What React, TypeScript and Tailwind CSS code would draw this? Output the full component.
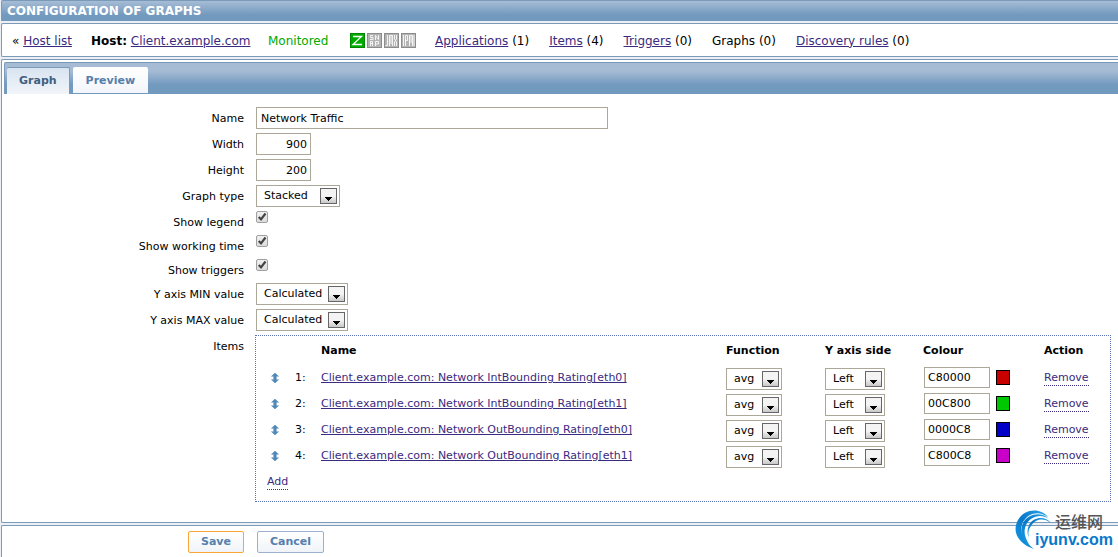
import { useState } from "react";
import type { ReactNode } from "react";

interface GraphItem {
  id: number;
  name: string;
  colour: string;
}

const initialItems: GraphItem[] = [
  { id: 1, name: "Client.example.com: Network IntBounding Rating[eth0]", colour: "C80000" },
  { id: 2, name: "Client.example.com: Network IntBounding Rating[eth1]", colour: "00C800" },
  { id: 3, name: "Client.example.com: Network OutBounding Rating[eth0]", colour: "0000C8" },
  { id: 4, name: "Client.example.com: Network OutBounding Rating[eth1]", colour: "C800C8" },
];

const hostLinks = [
  { label: "Applications", count: 1, link: true },
  { label: "Items", count: 4, link: true },
  { label: "Triggers", count: 0, link: true },
  { label: "Graphs", count: 0, link: false },
  { label: "Discovery rules", count: 0, link: true },
];

const linkClass = "text-[#3a2a80] underline";
const dottedClass = "inline-block cursor-pointer border-b border-dotted border-[#3a2a80] leading-[14px] text-[#3a2a80]";

const Select = ({ id, label, options, className }: { id: string; label?: string; options: string[]; className: string }) => (
  <div className={`relative ${className}`}>
    <select
      id={id}
      aria-label={label}
      className="block h-[22px] w-full appearance-none border border-[#aca899] bg-white pl-[7px] text-[11px] leading-5 outline-none"
    >
      {options.map((o) => (
        <option key={o}>{o}</option>
      ))}
    </select>
    <span className="pointer-events-none absolute top-[3px] right-[3px] flex h-4 w-[17px] items-end justify-center border border-[#666] bg-linear-to-b from-[#f4f4f4] from-50% to-[#c8c8c8] pb-[2px]">
      <svg width="7" height="4" viewBox="0 0 7 4" shapeRendering="crispEdges">
        <path d="M0 0h7v1h-1v1h-1v1h-1v1h-1v-1h-1v-1h-1v-1h-1z" fill="#000" />
      </svg>
    </span>
  </div>
);

const Row = ({ label, htmlFor, short, children }: { label: string; htmlFor?: string; short?: boolean; children: ReactNode }) => (
  <div className={`flex items-start gap-3 ${short ? "min-h-6" : "min-h-[26px]"}`}>
    <label htmlFor={htmlFor} className="w-[240px] shrink-0 text-right leading-6">
      {label}
    </label>
    {children}
  </div>
);

const Checkbox = ({ id }: { id: string }) => (
  <span className="relative block h-[13px] w-3">
    <input
      id={id}
      type="checkbox"
      defaultChecked
      className="peer block h-3 w-3 appearance-none rounded-xs border border-[#a0a0a0] bg-linear-to-b from-[#f0f0f0] to-[#dcdcdc]"
    />
    <svg viewBox="0 0 12 12" className="pointer-events-none absolute inset-0 hidden h-3 w-3 peer-checked:block">
      <path d="M2.8 6 5 8.400 9.500 2.500" fill="none" stroke="#444" strokeWidth="2.200" />
    </svg>
  </span>
);

const Badge = ({ title, active, children }: { title: string; active?: boolean; children: ReactNode }) => (
  <svg width="15" height="15" viewBox="0 0 15 15" role="img" aria-label={title}>
    <rect x="0.5" y="0.5" width="14" height="14" fill={active ? "#0a0" : "#b4b4b4"} stroke={active ? "#080" : "#8c8c8c"} />
    <g fill="none" stroke={active ? "#fff" : "#f4f4f4"} strokeWidth={active ? "1.300" : "1"}>
      {children}
    </g>
  </svg>
);

const SortHandle = () => (
  <svg width="8" height="10" viewBox="0 0 8 10" className="inline-block align-middle">
    <path d="M4 0 7.500 3.300H5.300v3.400H7.500L4 10 .5 6.700h2.200V3.300H.5z" fill="#5088b8" stroke="#5088b8" strokeWidth="0.500" />
  </svg>
);

const Watermark = () => (
  <svg
    width="100"
    height="42"
    viewBox="0 0 100 42"
    className="pointer-events-none absolute right-[4px] bottom-[6px]"
    role="img"
    aria-label="iyunv.com"
  >
    <defs>
      <linearGradient id="swirl" x1="0" y1="1" x2="1" y2="0">
        <stop offset="0" stopColor="#18a0e8" />
        <stop offset="0.5" stopColor="#0878c8" />
        <stop offset="1" stopColor="#2aa8e8" />
      </linearGradient>
    </defs>
    <g fill="url(#swirl)">
      <path d="M34 8C27-1 11-1 4 11C-2 22 3 34 20 40C10 32 4 23 9 13C14 4 25 1 34 8z" />
      <path d="M35 10C27 2 14 5 9 14C5 23 8 31 16 37C11 29 9 23 12 16C16 8 26 4 35 10z" />
      <path d="M37 14C31 6 19 8 15 16C13 21 13 25 15 29C14 24 14 21 17 17C21 10 29 8 37 14z" />
    </g>
    <text x="41" y="19" fontSize="16" fontWeight="500" fill="#555" fontFamily="'Liberation Sans', 'Noto Sans CJK SC', sans-serif">
      运维网
    </text>
    <text x="21" y="36" fontSize="16" fontWeight="700" fill="#0878cc" fontFamily="'Liberation Sans', sans-serif">
      iyunv.com
    </text>
  </svg>
);

const App = () => {
  const [items, setItems] = useState<GraphItem[]>(initialItems);
  const [name, setName] = useState("Network Traffic");

  const setColour = (id: number, colour: string) => {
    setItems((prev) => prev.map((i) => (i.id === id ? { ...i, colour } : i)));
  };

  const removeItem = (id: number) => {
    setItems((prev) => prev.filter((i) => i.id !== id));
  };

  return (
    <div className="relative flex flex-col gap-[2px] overflow-hidden bg-[#eceff4] pl-px font-['DejaVu_Sans',Verdana,sans-serif] text-[11px] text-black">
      <h1 className="h-[21px] rounded-tl-xs border-t border-l border-[#7b9aba] bg-linear-to-b from-[#a6bcd5] to-[#7299be] to-70% pl-[5px] text-[12px] leading-5 font-bold text-white">
        CONFIGURATION OF GRAPHS
      </h1>

      <nav className="flex h-[34px] items-center rounded-l-xs border-y border-l border-[#7b9aba] bg-white pt-px pl-[10px] text-[12px] whitespace-nowrap">
        <span className="w-[79px]">
          « <a href="#hosts" className={linkClass}>Host list</a>
        </span>
        <span className="w-[177px]">
          <b>Host:</b> <a href="#host" className={linkClass}>Client.example.com</a>
        </span>
        <span className="w-[82px] text-[#0a0]">Monitored</span>
        <span className="mr-[19px] flex gap-[2px]">
          <Badge title="Zabbix agent" active>
            <path d="M3 3.500h8.500L3 11.500h9" />
          </Badge>
          <Badge title="SNMP">
            <path d="M6 2.500H3.500v2H6v2H3M8.500 7V2.500l3 4V2M3.500 13V8.500h2V13M3.500 10.500h2M8.500 13V8.500h3v2.500h-3" />
          </Badge>
          <Badge title="JMX">
            <path d="M3.500 2v10.500H1.500M5.500 13V2.500h3V13M7 3v8M10.500 2v4l2 3v4M12.500 2v4l-2 3v4" />
          </Badge>
          <Badge title="IPMI">
            <path d="M2.500 2v11M4.500 13V2.500h2v5h-2M8.500 13V2.500h3V13M10 3v7M13 2v11" />
          </Badge>
        </span>
        <span className="flex gap-5">
          {hostLinks.map((l) => (
            <span key={l.label}>
              {l.link ? <a href={`#${l.label}`} className={linkClass}>{l.label}</a> : l.label} ({l.count})
            </span>
          ))}
        </span>
      </nav>

      <main className="rounded-l-xs border-y border-l border-[#7b9aba] bg-white pt-[2px] pb-5 pl-[2px]">
        <div role="tablist" className="flex h-8 items-end gap-[3px] rounded-tl-xs border-t border-l border-[#7b9aba] bg-linear-to-b from-[#a6bcd5] from-25% to-[#7299be] to-70% pl-[2px] font-bold">
          <button role="tab" aria-selected="true" className="h-[27px] rounded-t-xs border-t border-r border-[#7b9aba] bg-linear-to-b from-[#d8e4f0] to-[#f2f5fa] px-3 text-[#40607f]">
            Graph
          </button>
          <button role="tab" aria-selected="false" className="mb-px h-[26px] rounded-t-xs bg-linear-to-b from-white to-[#f2f5fa] px-[13px] pt-[2px] text-[#5580ac]">
            Preview
          </button>
        </div>

        <form className="pt-[13px] pr-[7px]">
          <Row label="Name" htmlFor="name">
            <input
              id="name"
              value={name}
              onChange={(e) => setName(e.target.value)}
              className="h-[22px] w-[352px] border border-[#aca899] px-1 outline-none"
            />
          </Row>
          <Row label="Width" htmlFor="width">
            <input id="width" defaultValue="900" className="h-[22px] w-[55px] border border-[#aca899] px-[3px] text-right outline-none" />
          </Row>
          <Row label="Height" htmlFor="height">
            <input id="height" defaultValue="200" className="h-[22px] w-[55px] border border-[#aca899] px-[3px] text-right outline-none" />
          </Row>
          <Row label="Graph type" htmlFor="type">
            <Select id="type" options={["Stacked", "Normal", "Pie", "Exploded"]} className="w-[84px]" />
          </Row>
          <Row label="Show legend" htmlFor="legend" short>
            <Checkbox id="legend" />
          </Row>
          <Row label="Show working time" htmlFor="working" short>
            <Checkbox id="working" />
          </Row>
          <Row label="Show triggers" htmlFor="triggers" short>
            <Checkbox id="triggers" />
          </Row>
          <Row label="Y axis MIN value" htmlFor="ymin">
            <Select id="ymin" options={["Calculated", "Fixed", "Item"]} className="w-[92px]" />
          </Row>
          <Row label="Y axis MAX value" htmlFor="ymax">
            <Select id="ymax" options={["Calculated", "Fixed", "Item"]} className="w-[92px]" />
          </Row>
          <Row label="Items">
            <div className="-ml-px min-w-0 flex-1 border border-dotted border-[#5f74b4] pb-[7px]">
              <table className="w-full table-fixed text-left">
                <thead>
                  <tr className="h-[30px]">
                    <th className="w-[39px]" />
                    <th className="w-[26px]" />
                    <th>Name</th>
                    <th className="w-[99px]">Function</th>
                    <th className="w-[98px]">Y axis side</th>
                    <th className="w-[121px]">Colour</th>
                    <th className="w-[66px]">Action</th>
                  </tr>
                </thead>
                <tbody>
                  {items.map((item, i) => (
                    <tr key={item.id} className="h-[26px] align-top leading-6">
                      <td className="pl-[15px]">
                        <SortHandle />
                      </td>
                      <td>{i + 1}:</td>
                      <td>
                        <a href={`#item-${item.id}`} className={linkClass}>{item.name}</a>
                      </td>
                      <td className="pt-[2px]">
                        <Select id={`fn-${item.id}`} label="Function" options={["avg", "min", "max", "all"]} className="w-14" />
                      </td>
                      <td className="pt-[2px]">
                        <Select id={`side-${item.id}`} label="Y axis side" options={["Left", "Right"]} className="w-[60px]" />
                      </td>
                      <td className="pt-px pl-px">
                        <div className="flex items-center gap-[6px]">
                          <input
                            aria-label="Colour"
                            value={item.colour}
                            onChange={(e) => setColour(item.id, e.target.value)}
                            className="h-[21px] w-[66px] border border-[#aca899] px-[3px] outline-none"
                          />
                          <span className="h-[15px] w-[14px] border border-black" style={{ backgroundColor: `#${item.colour}` }} />
                        </div>
                      </td>
                      <td>
                        <button type="button" onClick={() => removeItem(item.id)} className={dottedClass}>
                          Remove
                        </button>
                      </td>
                    </tr>
                  ))}
                </tbody>
              </table>
              <div className="pl-[11px] leading-6">
                <button type="button" className={dottedClass}>Add</button>
              </div>
            </div>
          </Row>
        </form>
      </main>

      <footer className="flex gap-[13px] rounded-tl-xs border-t border-l border-[#7b9aba] bg-white pt-[5px] pb-1 pl-[186px] text-[#5580ac]">
        <button className="h-[22px] rounded-xs border border-[#faa634] bg-linear-to-b from-white to-[#f0f4f9] px-3 pt-px font-bold">
          Save
        </button>
        <button className="h-[22px] rounded-xs border border-[#9ab0cc] bg-linear-to-b from-white to-[#f0f4f9] px-3 pt-px font-bold">
          Cancel
        </button>
      </footer>

      <Watermark />
    </div>
  );
};

export default App;
